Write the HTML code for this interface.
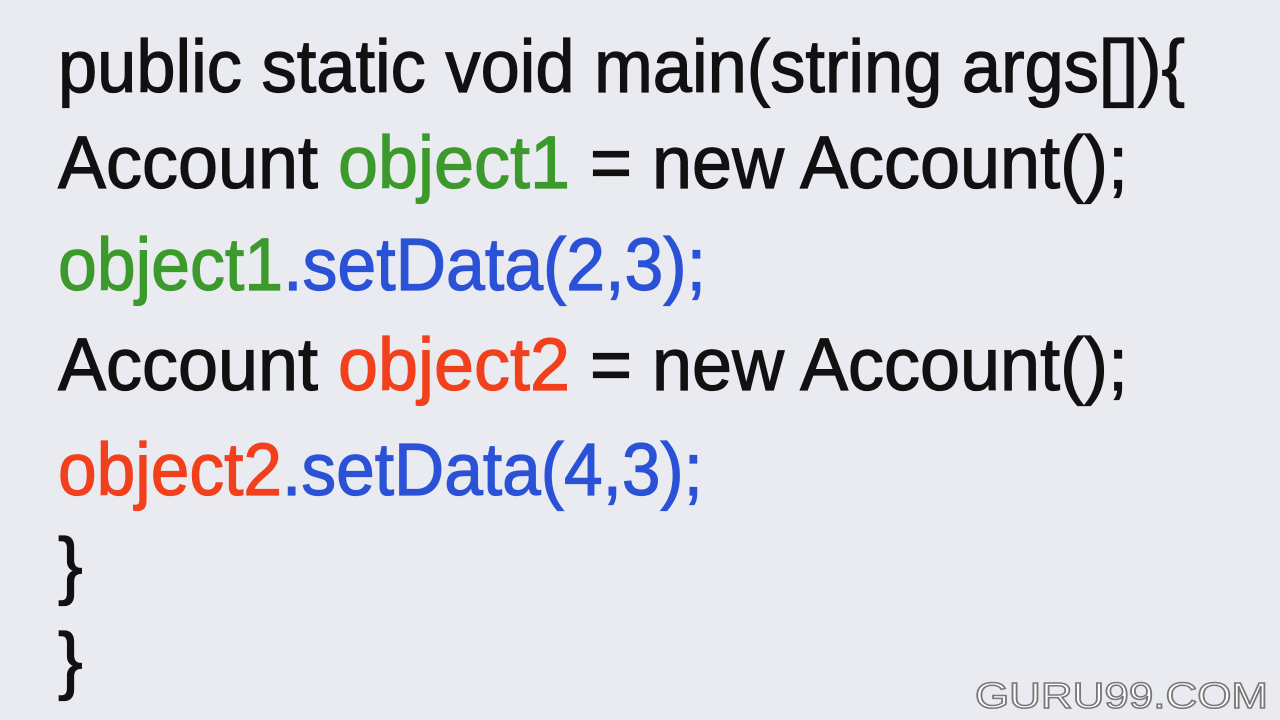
<!DOCTYPE html>
<html><head><meta charset="utf-8"><style>
html,body{margin:0;padding:0;width:1280px;height:720px;overflow:hidden;background:#e9ebf0;}
svg{display:block}
text{font-family:"Liberation Sans",sans-serif;font-size:74px;stroke-width:1.2px}
.k{fill:#111;stroke:#111}
.g{fill:#3c9a2c;stroke:#3c9a2c}
.b{fill:#2b52d6;stroke:#2b52d6}
.r{fill:#f2401c;stroke:#f2401c}
</style></head><body>
<svg width="1280" height="720" viewBox="0 0 1280 720">
<rect width="1280" height="720" fill="#e9ebf0"/>
<text x="58" y="92" textLength="1127" lengthAdjust="spacingAndGlyphs" class="k">public static void main(string args[]){</text>
<text x="58" y="188" textLength="1070" lengthAdjust="spacingAndGlyphs"><tspan class="k">Account </tspan><tspan class="g">object1</tspan><tspan class="k"> = new Account();</tspan></text>
<text x="58" y="290" textLength="648" lengthAdjust="spacingAndGlyphs"><tspan class="g">object1</tspan><tspan class="b">.setData(2,3);</tspan></text>
<text x="58" y="390" textLength="1070" lengthAdjust="spacingAndGlyphs"><tspan class="k">Account </tspan><tspan class="r">object2</tspan><tspan class="k"> = new Account();</tspan></text>
<text x="58" y="495" textLength="645" lengthAdjust="spacingAndGlyphs"><tspan class="r">object2</tspan><tspan class="b">.setData(4,3);</tspan></text>
<text x="58" y="590" class="k">}</text>
<text x="58" y="685" class="k">}</text>
<text x="975" y="708" textLength="293" lengthAdjust="spacingAndGlyphs" style="font-size:36px;fill:#fff;stroke:#777;stroke-width:1.5px">GURU99.COM</text>
</svg>
</body></html>
